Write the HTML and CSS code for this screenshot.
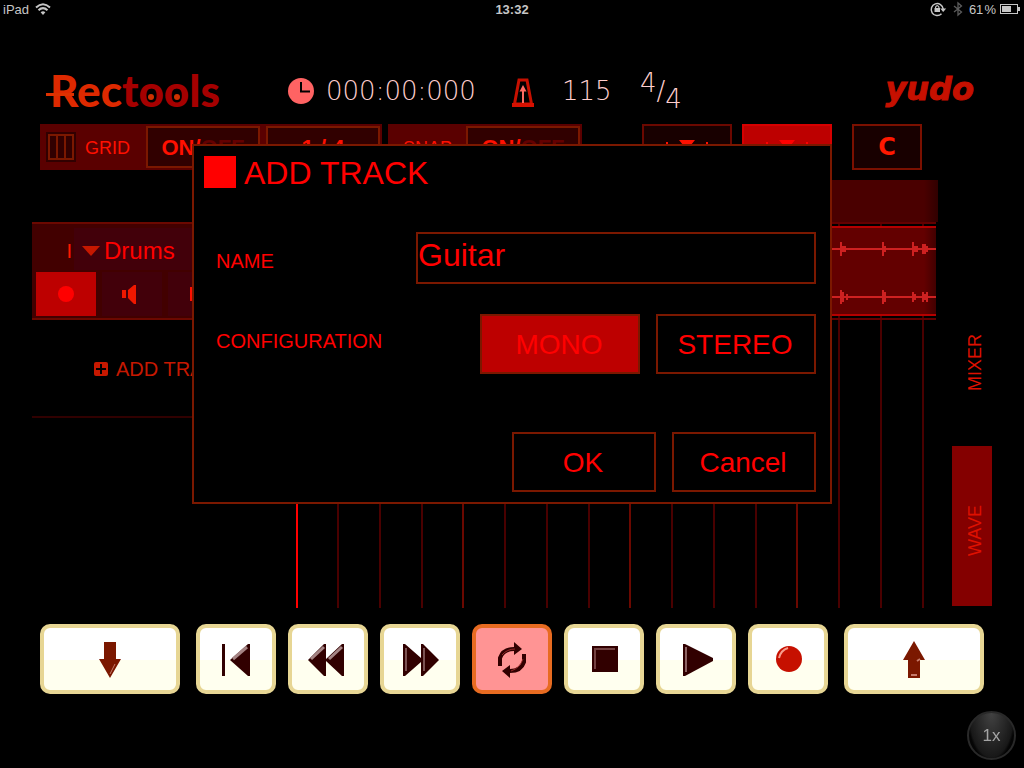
FILE: index.html
```html
<!DOCTYPE html>
<html lang="en">
<head>
  <meta charset="UTF-8" />
  <meta name="viewport" content="width=device-width, initial-scale=1.0" />
  <title>Rectools</title>
  <link rel="stylesheet" href="styles.css">
</head>
<body>

  <!-- Status Bar -->
  <div class="status-bar">
    <div class="status-left">
      <span>iPad</span>
      <svg width="16" height="12" viewBox="0 0 16 12" fill="none" stroke="#c6c6c6" stroke-width="2">
        <path d="M1 4.5 Q8 -2 15 4.5" />
        <path d="M3.5 7.3 Q8 3 12.5 7.3" />
        <path d="M8 12 L5.6 9.3 Q8 7.4 10.4 9.3 Z" fill="#c6c6c6" stroke="none" />
      </svg>
    </div>
    <div class="status-time">13:32</div>
    <div class="status-right">
      <svg class="lock-icon" width="17" height="16" viewBox="0 0 17 16" fill="none" stroke="#c6c6c6">
        <path d="M11.5 12.8 A6 6 0 1 1 13.2 8" stroke-width="1.5" />
        <path d="M10.2 7.5 H16.2 L13.2 11 Z" fill="#c6c6c6" stroke="none" />
        <rect x="4.5" y="7" width="5.5" height="4" fill="#c6c6c6" stroke="none" />
        <path d="M5.6 7 V6 Q7.2 3.4 8.9 6 V7" stroke-width="1.2" />
      </svg>
      <svg class="bluetooth-icon" width="10" height="14" viewBox="0 0 10 14" fill="none" stroke="#5c5c5c" stroke-width="1.3">
        <path d="M1 4 L8.5 10 L5 13 V1 L8.5 4 L1 10" />
      </svg>
      <span>61&hairsp;%</span>
      <svg width="21" height="11" viewBox="0 0 21 11">
        <rect x="0.5" y="0.5" width="17" height="9" fill="none" stroke="#c6c6c6" />
        <rect x="2" y="2" width="9" height="6" fill="#c6c6c6" />
        <rect x="18" y="3" width="2" height="4" fill="#c6c6c6" />
      </svg>
    </div>
  </div>

  <!-- Header -->
  <header class="header">
    <div class="logo">
      <span class="logo-rec">Rec</span><span class="logo-tools">t<span class="reel">o</span><span class="reel">o</span>ls</span>
    </div>
    <div class="readout">
      <svg width="26" height="26" viewBox="0 0 26 26">
        <circle cx="13" cy="13" r="13" fill="#ff6363" />
        <path d="M13 4 V13.5 H22" fill="none" stroke="#000" stroke-width="2" />
      </svg>
      <span class="time">000:00:000</span>
    </div>
    <div class="tempo">
      <svg width="22" height="32" viewBox="0 0 22 32">
        <path d="M7 5 H15 L19.5 29 H2.5 Z" fill="#000" stroke="#c61000" stroke-width="3" />
        <rect x="0" y="28" width="22" height="4" fill="#d61000" />
        <path d="M11 12 V28" stroke="#ff6b63" stroke-width="2" />
        <path d="M11 10 L14.5 16.5 H7.5 Z" fill="#ff6b63" />
      </svg>
      <span>115</span>
    </div>
    <div class="signature"><span class="beats">4</span><span>/</span><span class="unit">4</span></div>
    <div class="brand">yudo</div>
  </header>

  <!-- Toolbar -->
  <div class="toolbar">
    <div class="tool-group">
      <svg class="grid-icon" width="30" height="30" viewBox="0 0 30 30">
        <rect width="30" height="30" fill="#310000" />
        <path d="M3 3 H27 V27 H3 Z M11 3 V27 M19 3 V27" fill="none" stroke="#7b1800" stroke-width="2" />
      </svg>
      <span class="tool-label grid-label">GRID</span>
      <button class="toggle">ON/<span class="dim">OFF</span></button>
      <button class="toggle">1 / 4</button>
    </div>
    <div class="tool-group">
      <span class="tool-label snap-label">SNAP</span>
      <button class="toggle">ON/<span class="dim">OFF</span></button>
    </div>
    <div class="view-buttons">
      <button class="view-btn" aria-label="Zoom track">
        <svg width="42" height="18" viewBox="0 0 42 18" fill="#ff1000">
          <path d="M13 2 H29 L21 12 Z M0 4 H2 V14 H0 Z M40 4 H42 V14 H40 Z" />
        </svg>
      </button>
      <button class="view-btn active" aria-label="Follow playhead">
        <svg width="42" height="18" viewBox="0 0 42 18" fill="#ff0000">
          <path d="M13 2 H29 L21 12 Z M0 4 H2 V14 H0 Z M40 4 H42 V14 H40 Z" />
        </svg>
      </button>
    </div>
    <button class="clear-btn">C</button>
  </div>

  <!-- Tracks -->
  <main class="workspace">
    <div class="track-list">
      <div class="track">
        <div class="track-top">
          <span class="track-number">I</span>
          <div class="track-name">
            <svg width="18" height="10" viewBox="0 0 18 10"><path d="M0 0 H18 L9 10 Z" fill="#c61800" /></svg>
            <span>Drums</span>
          </div>
        </div>
        <div class="track-buttons">
          <button class="armed" aria-label="Arm">
            <svg width="16" height="16" viewBox="0 0 16 16"><circle cx="8" cy="8" r="8" fill="#ff0000" /></svg>
          </button>
          <button aria-label="Mute">
            <svg width="20" height="20" viewBox="0 0 20 20" fill="#ef1800"><path d="M0 6 H4 V14 H0 Z M6 6 L12 1 H14 V20 H12 L6 14 Z" /></svg>
          </button>
          <button aria-label="Solo">
            <svg width="16" height="14" viewBox="0 0 16 14" fill="#ff1000"><path d="M0 0 H4 V14 H0 Z M8 3 H16 V11 H8 Z" /></svg>
          </button>
        </div>
      </div>
      <button class="add-track">
        <svg width="14" height="14" viewBox="0 0 14 14">
          <rect width="14" height="14" rx="2" fill="#c61800" />
          <path d="M7 2 V12 M2 7 H12" stroke="#000" stroke-width="2" />
        </svg>
        ADD TRACK
      </button>
    </div>

    <div class="timeline">
      <div class="ruler"></div>
      <div class="lanes">
        <div class="lane">
          <div class="clip">
            <svg class="wave" viewBox="0 0 640 86" preserveAspectRatio="none" fill="#ce2121" shape-rendering="crispEdges">
              <path d="M0 20 H640 V22 H0 Z M0 68 H640 V70 H0 Z" />
              <path d="M544 14 h2 v4 h4 v6 h-4 v4 h-2 Z M586 14 h2 v4 h2 v6 h-2 v4 h-2 Z M616 14 h2 v4 h4 v6 h-4 v4 h-2 Z M626 16 h4 v2 h2 v6 h-2 v2 h-4 Z" />
              <path d="M544 62 h2 v2 h2 v10 h-2 v2 h-2 Z M550 66 h2 v6 h-2 Z M586 62 h2 v2 h2 v10 h-2 v2 h-2 Z M616 64 h2 v2 h2 v6 h-2 v2 h-2 Z M626 64 h2 v10 h-2 Z M628 66 h2 v6 h-2 Z M630 64 h2 v10 h-2 Z" />
            </svg>
          </div>
        </div>
      </div>
    </div>

    <nav class="tabs">
      <button class="tab mixer-tab">MIXER</button>
      <button class="tab wave-tab selected">WAVE</button>
    </nav>
  </main>

  <!-- Transport -->
  <footer class="transport">
    <button class="key wide-left" aria-label="Down">
      <svg width="24" height="38" viewBox="0 0 24 38">
        <path d="M6 1 H18 V18 H23 L12 37 L1 18 H6 Z" fill="#7b1800" />
        <path d="M12 33 L17 23" stroke="#c67b6b" stroke-width="1" />
      </svg>
    </button>
    <button class="key" aria-label="To start">
      <svg width="32" height="34" viewBox="0 0 32 34">
        <path d="M2 1 H5 V33 H2 Z M30 1 V33 H28 L10 17 L28 1 Z" fill="#310000" />
        <path d="M13 16 L27 4" stroke="#a58484" stroke-width="3" />
      </svg>
    </button>
    <button class="key" aria-label="Rewind">
      <svg width="38" height="34" viewBox="0 0 38 34">
        <path d="M17 1 V16 L33 1 H35 V33 H33 L17 18 V33 H15 L-1 17 L15 1 Z" fill="#310000" />
        <path d="M2 16 L15 4 M20 16 L33 4" stroke="#a58484" stroke-width="3" />
      </svg>
    </button>
    <button class="key" aria-label="Fast forward">
      <svg width="38" height="34" viewBox="0 0 38 34">
        <path d="M2 1 H4 L20 15 V1 H22 L38 17 L22 33 H20 V19 L4 33 H2 Z" fill="#310000" />
        <path d="M5 5 V28 M23 5 V28" stroke="#7b5252" stroke-width="2" />
      </svg>
    </button>
    <button class="key looping" aria-label="Loop">
      <svg width="30" height="36" viewBox="0 0 30 36">
        <path d="M3 24 V16 Q6 7 17 7 M27 12 V20 Q24 29 13 29" fill="none" stroke="#310000" stroke-width="4" />
        <path d="M17 0 L25 7 L17 13 Z M13 23 L5 29 L13 36 Z" fill="#310000" />
        <path d="M5 13 Q10 7 18 7 M26 17 Q23 26 14 29" fill="none" stroke="#942929" stroke-width="1" />
      </svg>
    </button>
    <button class="key" aria-label="Stop">
      <svg width="28" height="30" viewBox="0 0 28 30">
        <rect x="2" y="1" width="26" height="26" fill="#310000" />
        <path d="M5 24 V4 H25" fill="none" stroke="#734242" stroke-width="2" />
      </svg>
    </button>
    <button class="key" aria-label="Play">
      <svg width="34" height="34" viewBox="0 0 34 34">
        <path d="M4 1 H6 L34 15 V18 L6 33 H4 Z" fill="#310000" />
        <path d="M7 4 V29" stroke="#8c6363" stroke-width="2" />
      </svg>
    </button>
    <button class="key" aria-label="Record">
      <svg width="28" height="30" viewBox="0 0 28 30">
        <circle cx="15" cy="14" r="13" fill="#c61000" />
        <path d="M5 13 Q7 5 14 3" fill="none" stroke="#f79c8c" stroke-width="2" />
      </svg>
    </button>
    <button class="key wide-right" aria-label="Up">
      <svg width="24" height="38" viewBox="0 0 24 38">
        <path d="M12 0 L23 19 H18 V37 H6 V19 H1 Z" fill="#7b1800" />
        <path d="M9 34 H15 M15 20 L18 18" stroke="#c67b6b" stroke-width="2" />
      </svg>
    </button>
  </footer>

  <button class="scale-btn">1x</button>

  <!-- Add Track Dialog -->
  <div class="overlay">
    <form class="dialog" id="trackForm">
      <div class="dialog-title">
        <span class="square"></span>
        <h1>ADD TRACK</h1>
      </div>
      <div class="field name-field">
        <label for="trackName">NAME</label>
        <input type="text" id="trackName" value="Guitar" />
      </div>
      <div class="field">
        <span class="field-label">CONFIGURATION</span>
        <div class="options">
          <button type="button" class="btn chosen">MONO</button>
          <button type="button" class="btn">STEREO</button>
        </div>
      </div>
      <div class="actions">
        <button type="button" class="btn">OK</button>
        <button type="button" class="btn">Cancel</button>
      </div>
    </form>
  </div>

</body>
</html>
```
FILE: styles.css
```css
* {
  box-sizing: border-box;
}

body {
  margin: 0;
  min-height: 100vh;
  display: flex;
  flex-direction: column;
  background-color: #000;
  color: #ff0000;
  font-family: "Liberation Sans", Arial, sans-serif;
  position: relative;
}

button {
  display: flex;
  align-items: center;
  justify-content: center;
  margin: 0;
  padding: 0;
  border: none;
  border-radius: 0;
  background: none;
  color: inherit;
  font-family: inherit;
  cursor: pointer;
}

svg {
  display: block;
  flex: none;
  overflow: visible;
}

/* status bar */
.status-bar {
  display: grid;
  grid-template-columns: 1fr auto 1fr;
  align-items: center;
  height: 20px;
  padding: 0 3px 2px;
  color: #c6c6c6;
  font-size: 13px;
}

.status-left,
.status-right {
  display: flex;
  align-items: center;
  gap: 6px;
}

.status-time {
  font-weight: bold;
}

.status-right {
  justify-content: flex-end;
  gap: 4px;
}

.bluetooth-icon {
  margin: 0 2px;
}

/* header */
.header {
  display: grid;
  grid-template-columns: 242px 224px 128px 1fr auto;
  align-items: center;
  height: 104px;
  padding: 0 50px 0 46px;
}

.logo {
  position: relative;
  justify-self: start;
  padding: 0 0 0 4px;
  font-family: Lato, sans-serif;
  font-size: 44px;
  font-weight: 900;
  line-height: 44px;
  margin-top: 36px;
}

.logo::before {
  content: "";
  position: absolute;
  left: 0;
  top: 25px;
  width: 28px;
  height: 3px;
  background-color: #de3100;
}

.logo-rec {
  color: #de2900;
}

.logo-tools {
  color: #a50000;
}

.reel {
  position: relative;
}

.reel::after {
  content: "";
  position: absolute;
  left: 50%;
  bottom: 16px;
  width: 6px;
  height: 6px;
  margin-left: -3px;
  border-radius: 50%;
  background-color: #ce3100;
}

.readout,
.tempo,
.signature {
  display: flex;
  align-items: center;
  margin-top: 38px;
  color: #ffcece;
  font-family: "DejaVu Sans", sans-serif;
  font-weight: 200;
  font-size: 26px;
  line-height: 30px;
}

.readout {
  gap: 12px;
}

.tempo {
  gap: 28px;
}

.beats {
  padding-bottom: 16px;
}

.unit {
  padding-top: 16px;
}

.brand {
  margin-top: 34px;
  color: #c61000;
  -webkit-text-stroke: 1px #c61000;
  font-family: "DejaVu Sans", sans-serif;
  font-size: 32px;
  font-weight: bold;
  font-style: italic;
  line-height: 32px;
}

/* toolbar */
.toolbar {
  display: flex;
  height: 46px;
  padding: 0 40px;
}

.tool-group {
  display: flex;
  align-items: center;
  gap: 6px;
  margin-right: 6px;
  padding: 2px;
  background-color: #5a0000;
}

.grid-icon {
  margin-left: 4px;
}

.tool-label {
  padding-top: 2px;
  color: #ff1000;
  font-size: 18px;
}

.grid-label {
  width: 58px;
  padding-left: 3px;
}

.snap-label {
  width: 70px;
  padding-left: 13px;
}

.toggle {
  width: 114px;
  height: 42px;
  padding-top: 2px;
  border: 2px solid #7b1800;
  background-color: #310000;
  color: #ff1000;
  font-size: 22px;
  font-weight: bold;
}

.dim {
  color: #630000;
}

.view-buttons {
  display: flex;
  gap: 10px;
  margin: 0 20px 0 54px;
}

.view-btn {
  width: 90px;
  border: 2px solid #6b0800;
  background-color: #180000;
}

.view-btn.active {
  border-color: #d60000;
  background-color: #bd0000;
}

.clear-btn {
  width: 70px;
  border: 2px solid #7b1000;
  background-color: #180000;
  color: #ff1800;
  font-family: "DejaVu Sans", sans-serif;
  font-size: 24px;
  font-weight: bold;
}

/* tracks */
.workspace {
  flex: 1;
  display: grid;
  grid-template-columns: 264px 1fr 40px;
  margin-top: 10px;
  padding: 0 32px;
}

.track-list {
  padding-top: 42px;
}

.track {
  height: 98px;
  padding: 2px 4px;
  border-top: 2px solid #6b0800;
  border-bottom: 2px solid #6b0800;
  background-color: #420000;
}

.track-top {
  display: flex;
  align-items: center;
  height: 46px;
  font-size: 24px;
}

.track-number {
  width: 38px;
  padding: 4px 2px 0 0;
  color: #ff1800;
  font-size: 20px;
  text-align: right;
}

.track-name {
  flex: 1;
  display: flex;
  align-items: center;
  gap: 4px;
  height: 42px;
  padding: 4px 8px 0;
  background-color: #42000a;
}

.track-buttons {
  display: flex;
  gap: 6px;
}

.track-buttons button {
  width: 60px;
  height: 44px;
  background-color: #42000a;
}

.track-buttons .armed {
  background-color: #bd0000;
}

.add-track {
  width: 100%;
  height: 98px;
  gap: 8px;
  border-bottom: 2px solid #310000;
  justify-content: flex-start;
  padding: 2px 0 0 62px;
  color: #c61800;
  font-size: 20px;
}

.timeline {
  display: flex;
  flex-direction: column;
  margin-right: 14px;
  border-left: 2px solid #ff0000;
}

.ruler {
  height: 42px;
  background: linear-gradient(to left, #310000, #4a0000 14px);
}

.lanes {
  flex: 1;
  /* one measure is 167px, a brighter bar line and three beats */
  background-image: linear-gradient(to right,
    #6b0800 2px, transparent 2px, transparent 42px,
    #4a0000 42px, #4a0000 44px, transparent 44px, transparent 84px,
    #4a0000 84px, #4a0000 86px, transparent 86px, transparent 126px,
    #4a0000 126px, #4a0000 128px, transparent 128px);
  background-size: 167px 100%;
  background-position: -3px 0;
}

.lane {
  height: 98px;
  margin-right: 2px;
  padding: 2px 0;
  border-top: 2px solid #630000;
  border-bottom: 2px solid #630000;
}

.clip {
  height: 90px;
  border-top: 2px solid #b50000;
  border-bottom: 2px solid #b50000;
  background: linear-gradient(to left, #420000, #630000 12px);
}

.wave {
  width: 100%;
  height: 86px;
}

.tabs {
  display: flex;
  flex-direction: column;
  justify-content: flex-end;
  padding-bottom: 2px;
}

.tab {
  width: 40px;
  height: 160px;
  color: #de1000;
  font-size: 18px;
  writing-mode: vertical-rl;
  transform: rotate(180deg);
}

.mixer-tab {
  padding: 8px 6px 0 0;
}

.wave-tab {
  padding: 0 6px 8px 0;
}

.tab.selected {
  background-color: #840000;
}

/* transport */
.transport {
  display: grid;
  grid-template-columns: 9fr repeat(7, 5fr) 9fr;
  gap: 12px;
  padding: 16px 40px 74px;
}

.key {
  height: 70px;
  padding-top: 2px;
  border: 4px solid #e7d694;
  border-radius: 10px;
  background: linear-gradient(#fff 32px, #ffffef 32px);
}

.wide-left {
  margin-right: 4px;
}

.wide-right {
  margin-left: 4px;
}

.looping {
  border-color: #e76b21;
  background: #ff9494;
}

.scale-btn {
  position: fixed;
  right: 8px;
  bottom: 8px;
  width: 49px;
  height: 49px;
  border: 2px solid #292929;
  border-radius: 50%;
  background: radial-gradient(ellipse at 50% 0, #424242, #181818 22px, #050505 24px);
  color: #a5a5a5;
  font-size: 17px;
}

/* add track dialog */
.overlay {
  position: absolute;
  top: 144px;
  left: 0;
  right: 0;
  display: flex;
  justify-content: center;
}

.dialog {
  width: 640px;
  padding: 10px 14px 10px 10px;
  border: 2px solid #7b1800;
  background-color: #000;
}

.dialog-title {
  display: flex;
  align-items: center;
  gap: 8px;
  height: 32px;
}

.square {
  width: 32px;
  height: 32px;
  background-color: #ff0000;
}

.dialog h1 {
  margin: 0;
  padding-top: 2px;
  font-size: 32px;
  font-weight: normal;
}

.field {
  display: flex;
  align-items: center;
  justify-content: space-between;
  margin-top: 30px;
  padding-left: 12px;
  font-size: 20px;
}

.name-field {
  margin-top: 44px;
}

.field label {
  padding-top: 6px;
}

.field-label {
  padding-bottom: 6px;
}

.field input {
  width: 400px;
  height: 52px;
  padding: 0 0 6px;
  border: 2px solid #7b1800;
  border-radius: 0;
  outline: none;
  background-color: #000;
  color: #ff0000;
  font-family: inherit;
  font-size: 32px;
}

.options,
.actions {
  display: flex;
  justify-content: flex-end;
  gap: 16px;
}

.actions {
  margin-top: 58px;
}

.btn {
  width: 160px;
  height: 60px;
  padding: 2px 2px 0 0;
  border: 2px solid #7b1800;
  color: #ff0000;
  font-size: 28px;
}

.actions .btn {
  width: 144px;
}

.btn.chosen {
  background-color: #bd0000;
}
```
